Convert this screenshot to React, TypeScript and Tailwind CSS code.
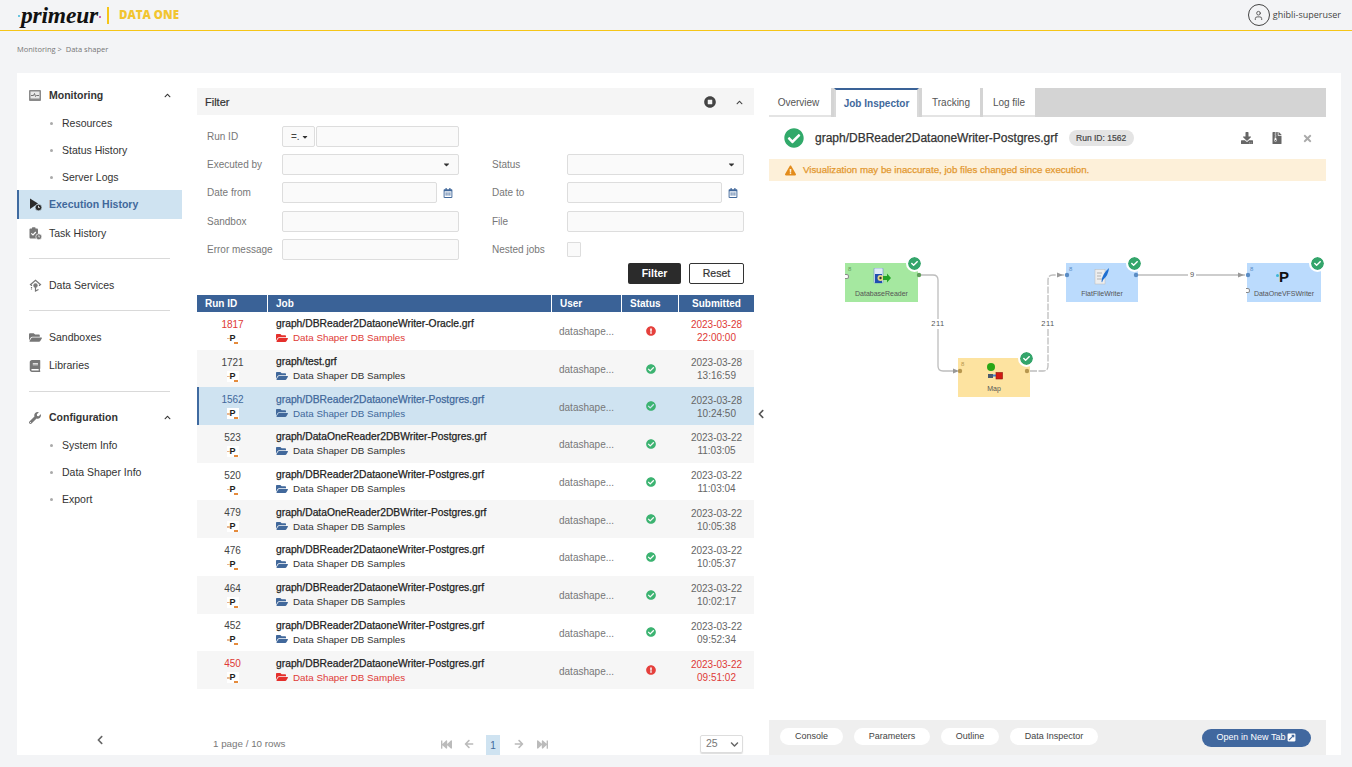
import type { ReactNode } from 'react'
import {
  FaBook,
  FaCaretDown,
  FaCheck,
  FaCheckCircle,
  FaChevronDown,
  FaChevronLeft,
  FaChevronUp,
  FaDownload,
  FaExclamationCircle,
  FaExclamationTriangle,
  FaExternalLinkSquareAlt,
  FaFastBackward,
  FaFastForward,
  FaArrowLeft,
  FaArrowRight,
  FaFileArchive,
  FaFolderOpen,
  FaRegCalendarAlt,
  FaStopCircle,
  FaTimes,
  FaWrench,
} from 'react-icons/fa'
import { LuUser } from 'react-icons/lu'

const sans = "font-['Liberation_Sans',Arial,sans-serif]"

interface Job {
  id: number
  path: string
  user?: string
  date: string
  time: string
  failed?: boolean
  selected?: boolean
}

const jobs: Job[] = [
  { id: 1817, path: 'graph/DBReader2DataoneWriter-Oracle.grf', date: '2023-03-28', time: '22:00:00', failed: true },
  { id: 1721, path: 'graph/test.grf', date: '2023-03-28', time: '13:16:59' },
  { id: 1562, path: 'graph/DBReader2DataoneWriter-Postgres.grf', date: '2023-03-28', time: '10:24:50', selected: true },
  { id: 523, path: 'graph/DataOneReader2DBWriter-Postgres.grf', date: '2023-03-22', time: '11:03:05' },
  { id: 520, path: 'graph/DBReader2DataoneWriter-Postgres.grf', date: '2023-03-22', time: '11:03:04' },
  { id: 479, path: 'graph/DataOneReader2DBWriter-Postgres.grf', date: '2023-03-22', time: '10:05:38' },
  { id: 476, path: 'graph/DBReader2DataoneWriter-Postgres.grf', date: '2023-03-22', time: '10:05:37' },
  { id: 464, path: 'graph/DBReader2DataoneWriter-Postgres.grf', date: '2023-03-22', time: '10:02:17' },
  { id: 452, path: 'graph/DBReader2DataoneWriter-Postgres.grf', date: '2023-03-22', time: '09:52:34' },
  { id: 450, path: 'graph/DBReader2DataoneWriter-Postgres.grf', date: '2023-03-22', time: '09:51:02', failed: true },
]

function PulseIcon() {
  return (
    <svg width="12" height="11" viewBox="0 0 12 11">
      <rect x="0" y="0" width="12" height="11" rx="1" fill="#8a8a8a" />
      <rect x="1.5" y="1.5" width="9" height="7" fill="#e8e8e8" />
      <path d="M2 5.5h2.5l1-2 1 3 1-1H10" fill="none" stroke="#666" strokeWidth="0.9" />
    </svg>
  )
}

function ExecIcon() {
  return (
    <svg width="13" height="13" viewBox="0 0 13 13">
      <path d="M1 0.5 9 5.5 1 11z" fill="#2b2b2b" />
      <circle cx="9.5" cy="9.5" r="3.3" fill="#2b2b2b" stroke="#cfe3f1" strokeWidth="0.6" />
      <path d="M9.5 7.8v1.8h1.3" fill="none" stroke="#fff" strokeWidth="0.8" />
    </svg>
  )
}

function TaskIcon() {
  return (
    <svg width="13" height="13" viewBox="0 0 13 13">
      <rect x="0.5" y="1.5" width="8.5" height="10" rx="1" fill="#777" />
      <rect x="3" y="0.3" width="3.5" height="2.2" rx="0.6" fill="#777" />
      <path d="M2.3 6.3 4 8l2.8-3" fill="none" stroke="#fff" strokeWidth="1.2" />
      <circle cx="9.8" cy="9.8" r="3" fill="#777" stroke="#fff" strokeWidth="0.7" />
      <path d="M9.8 8.4v1.5h1.1" fill="none" stroke="#fff" strokeWidth="0.7" />
    </svg>
  )
}

function ServicesIcon() {
  return (
    <svg width="13" height="13" viewBox="0 0 13 13" fill="none" stroke="#777" strokeWidth="1.2">
      <path d="M1 6 6.5 1.2 12 6" />
      <path d="M2.5 5.5V11M10.5 5.5V8" strokeDasharray="1.5 1" />
      <circle cx="6.5" cy="6.5" r="1.6" fill="#777" />
      <path d="M6.5 8v4l3-1.5" />
    </svg>
  )
}

function MenuRow({ icon, label, chevron, active, strong, className }: { icon: ReactNode; label: string; chevron?: boolean; active?: boolean; strong?: boolean; className?: string }) {
  return (
    <div
      className={`flex items-center pr-[11px] text-[10.5px] ${active ? 'bg-[#cfe3f1] border-l-2 border-[#3f6aa0] pl-[10px] font-bold text-[#41689b]' : 'pl-[12px] text-[#333]'} ${strong ? 'font-bold' : ''} ${className ?? ''}`}
    >
      <span className="flex w-[20px] justify-start">{icon}</span>
      <span className="flex-1">{label}</span>
      {chevron && <FaChevronUp size={7} className="text-[#333]" />}
    </div>
  )
}

function SubRow({ label }: { label: string }) {
  return (
    <div className="flex h-[27px] items-center pl-[33px] pt-[2px] text-[10.5px] text-[#333]">
      <span className="mr-[9px] h-[3px] w-[3px] rounded-full bg-[#aaa]" />
      {label}
    </div>
  )
}

function Sidebar() {
  return (
    <aside className="flex w-[165px] shrink-0 flex-col pt-[9px]">
      <MenuRow className="h-[27px]" strong icon={<PulseIcon />} label="Monitoring" chevron />
      <SubRow label="Resources" />
      <SubRow label="Status History" />
      <SubRow label="Server Logs" />
      <MenuRow className="h-[29px]" active icon={<ExecIcon />} label="Execution History" />
      <MenuRow className="h-[29px]" icon={<TaskIcon />} label="Task History" />
      <div className="mx-[12px] mt-[10px] h-px bg-[#d9d9d9]" />
      <MenuRow className="mt-[13px] h-[27px]" icon={<ServicesIcon />} label="Data Services" />
      <div className="mx-[12px] mt-[11px] h-px bg-[#d9d9d9]" />
      <MenuRow className="mt-[13px] h-[27px]" icon={<FaFolderOpen size={13} className="text-[#777]" />} label="Sandboxes" />
      <MenuRow className="mt-px h-[27px]" icon={<FaBook size={12} className="text-[#777]" />} label="Libraries" />
      <div className="mx-[12px] mt-[12px] h-px bg-[#d9d9d9]" />
      <MenuRow className="mt-[12px] h-[27px]" strong icon={<FaWrench size={12} className="text-[#777]" />} label="Configuration" chevron />
      <SubRow label="System Info" />
      <SubRow label="Data Shaper Info" />
      <SubRow label="Export" />
      <div className="mt-auto flex h-[20px] items-start justify-center">
        <FaChevronLeft size={10} className="text-[#666]" />
      </div>
    </aside>
  )
}

function Field({ width = 'w-[177px]', caret }: { width?: string; caret?: boolean }) {
  return (
    <div className={`flex h-[21px] items-center justify-end rounded-[2px] border border-[#ddd] bg-[#fafafa] pr-[7px] ${width}`}>
      {caret && <FaCaretDown size={9} className="text-[#333]" />}
    </div>
  )
}

function Label({ children }: { children: string }) {
  return <span className="text-[10px] text-[#777]">{children}</span>
}

function FilterForm() {
  return (
    <div className="grid grid-cols-[75px_177px_33px_75px_177px] grid-rows-[21px_21px_21px_22px_21px] items-center gap-y-[7px] px-[10px] pt-[11px]">
      <Label>Run ID</Label>
      <div className="flex">
        <div className="flex h-[21px] w-[33px] items-center justify-between rounded-[2px] border border-[#ddd] bg-[#fafafa] pl-[8px] pr-[5px] text-[10px] text-[#444]">
          =.<FaCaretDown size={8} className="text-[#333]" />
        </div>
        <Field width="ml-px w-[143px]" />
      </div>
      <span className="col-span-3" />

      <Label>Executed by</Label>
      <Field caret />
      <span />
      <Label>Status</Label>
      <Field caret />

      <Label>Date from</Label>
      <div className="flex items-center">
        <Field width="w-[155px]" />
        <FaRegCalendarAlt size={10} className="ml-[6px] text-[#41689b]" />
      </div>
      <span />
      <Label>Date to</Label>
      <div className="flex items-center">
        <Field width="w-[155px]" />
        <FaRegCalendarAlt size={10} className="ml-[6px] text-[#41689b]" />
      </div>

      <Label>Sandbox</Label>
      <Field />
      <span />
      <Label>File</Label>
      <Field />

      <Label>Error message</Label>
      <Field />
      <span />
      <Label>Nested jobs</Label>
      <div className="h-[15px] w-[14px] rounded-[1px] border border-[#ddd] bg-[#fafafa]" />
    </div>
  )
}

// small job type mark, the same in every row
function JobMark() {
  return (
    <span className="relative flex h-[11px] w-[12px] items-center justify-center bg-white font-['Liberation_Sans'] text-[9px] font-bold leading-none text-[#222]">
      <span className="absolute left-0 top-[5px] h-[1.5px] w-[3px] bg-[#e7b68f]" />
      P
      <span className="absolute bottom-0 right-[1px] h-[2px] w-[4px] bg-[#e58b3c]" />
    </span>
  )
}

function JobRow({ job, striped }: { job: Job; striped: boolean }) {
  const bg = job.selected ? 'bg-[#cfe3f1]' : striped ? 'bg-[#f6f6f6]' : 'bg-white'
  const accent = job.failed ? 'text-[#de3a36]' : job.selected ? 'text-[#41689b]' : 'text-[#333]'
  return (
    <div className={`relative grid h-[37.7px] grid-cols-[71px_284px_70px_57px_75px] items-center ${bg}`}>
      {job.selected && <span className="absolute bottom-0 left-0 top-0 w-[2px] bg-[#3f6aa0]" />}
      <div className={`flex flex-col items-center gap-[2px] text-[10px] ${job.failed ? 'text-[#de3a36]' : job.selected ? 'text-[#41689b]' : 'text-[#444]'}`}>
        <span className="leading-[13px]">{job.id}</span>
        <JobMark />
      </div>
      <div className="flex flex-col gap-[1px] pl-[8px]">
        <span className={`text-[10.3px] leading-[13px] [-webkit-text-stroke:0.25px] ${job.selected ? 'text-[#41689b]' : 'text-[#222]'}`}>{job.path}</span>
        <span className={`flex items-center gap-[5px] text-[9.8px] leading-[13px] ${accent}`}>
          <FaFolderOpen size={12} className={job.failed ? 'text-[#e5302c]' : 'text-[#41689b]'} />
          Data Shaper DB Samples
        </span>
      </div>
      <span className="pl-[7px] pt-[2px] text-[10px] text-[#777]">datashape...</span>
      <span className="flex justify-center">
        {job.failed ? <FaExclamationCircle size={10} className="text-[#e5403c]" /> : <FaCheckCircle size={10} className="text-[#3cb371]" />}
      </span>
      <span className={`pt-[1px] text-center text-[10px] leading-[13px] ${job.failed ? 'text-[#de3a36]' : 'text-[#666]'}`}>
        {job.date}
        <br />
        {job.time}
      </span>
    </div>
  )
}

function JobTable() {
  return (
    <>
      <div className="mt-[11px] grid h-[17px] grid-cols-[71px_284px_70px_57px_75px] items-center bg-[#3a6297] text-[10px] font-bold text-white">
        <span className="flex h-full items-center border-r border-white pl-[8px]">Run ID</span>
        <span className="flex h-full items-center border-r border-white pl-[8px]">Job</span>
        <span className="flex h-full items-center border-r border-white pl-[8px]">User</span>
        <span className="flex h-full items-center border-r border-white pl-[8px]">Status</span>
        <span className="flex h-full items-center justify-center">Submitted</span>
      </div>
      {jobs.map((job, i) => (
        <JobRow key={job.id} job={job} striped={i % 2 === 1} />
      ))}
    </>
  )
}

function Pagination() {
  return (
    <div className="mt-auto flex h-[20px] items-center pb-[2px] text-[#bbb]">
      <span className="ml-[16px] w-[228px] text-[9.8px] text-[#777]">1 page / 10 rows</span>
      <FaFastBackward size={11} />
      <FaArrowLeft size={10} className="ml-[12px]" />
      <span className="ml-[12px] flex h-[20px] w-[14px] items-center justify-center self-start bg-[#cfe3f1] text-[10px] text-[#41689b]">1</span>
      <FaArrowRight size={10} className="ml-[14px]" />
      <FaFastForward size={11} className="ml-[13px]" />
      <div className="ml-auto mr-[11px] flex h-[18px] w-[43px] items-center justify-between rounded-[2px] border border-[#ddd] pl-[5px] pr-[3px] text-[10.5px] text-[#777] shadow-[0_1px_1px_#ddd]">
        25
        <FaChevronDown size={9} className="text-[#666]" />
      </div>
    </div>
  )
}

function NodeCheck({ className }: { className: string }) {
  return (
    <span className={`absolute flex h-[13px] w-[13px] items-center justify-center rounded-full bg-[#34a56b] outline-2 outline-white ${className}`}>
      <FaCheck size={7} className="text-white" />
    </span>
  )
}

function GraphNode({ label, className, dot, children }: { label: string; className: string; dot: string; children: ReactNode }) {
  return (
    <div className={`absolute h-[39px] ${className}`}>
      <span className={`absolute left-[3px] top-[2px] text-[6px] leading-[8px] ${dot}`}>8</span>
      <div className="flex h-[23px] justify-center pt-[5px]">{children}</div>
      <div className="mt-[3px] text-center text-[7px] leading-[9px] text-[#555]">{label}</div>
      <NodeCheck className="-top-[6px] -right-[3px]" />
    </div>
  )
}

function GraphCanvas() {
  return (
    <div className="relative flex-1 bg-white">
      <svg className="absolute inset-0 h-full w-full" fill="none" stroke="#bdbdbd" strokeWidth="1.3">
        <path d="M152 94h12q5 0 5 5v86q0 5 5 5h14" />
        <path d="M261 190h13q5 0 5-5V99q0-5 5-5h14" strokeDasharray="7 1.5" />
        <path d="M369 94h107" />
        <path d="M184 187.500l6 2.500-6 2.500zM288 91.500l6 2.500-6 2.500zM469 91.500l6 2.500-6 2.500z" fill="#999" stroke="none" />
      </svg>
      <span className="absolute left-[160px] top-[138px] w-[18px] bg-white text-center text-[7.5px] leading-[10px] tracking-[0.5px] text-[#555]">211</span>
      <span className="absolute left-[270px] top-[138px] w-[18px] bg-white text-center text-[7.5px] leading-[10px] tracking-[0.5px] text-[#555]">211</span>
      <span className="absolute left-[419px] top-[89px] w-[8px] bg-white text-center text-[7.5px] leading-[10px] text-[#555]">9</span>

      <GraphNode label="DatabaseReader" className="left-[76px] top-[82px] w-[73px] bg-[#a5e8a0]" dot="text-[#5f9c5a]">
        <svg width="18" height="17" viewBox="0 0 18 17">
          <rect x="1" y="0" width="9" height="15" rx="1" fill="#dfe9f7" stroke="#6b8fc9" strokeWidth="0.6" />
          <rect x="2" y="6" width="7" height="9" fill="#1f4fb0" />
          <circle cx="7.500" cy="10" r="3" fill="#e7d68a" />
          <circle cx="7.500" cy="10" r="1.200" fill="#333" />
          <path d="M10 8h4V5.500L18 10l-4 4.500V12h-4z" fill="#23a327" />
        </svg>
      </GraphNode>
      <GraphNode label="Map" className="left-[189px] top-[177px] w-[72px] bg-[#fde3a0]" dot="text-[#b8974e]">
        <svg width="18" height="17" viewBox="0 0 18 17">
          <circle cx="6" cy="4" r="4" fill="#2aa615" />
          <path d="M3 11h5v4H3z" fill="#4a5a6e" />
          <path d="M8 12.500h4" stroke="#3f86d8" strokeWidth="2" />
          <rect x="11" y="9.500" width="6.500" height="6.500" fill="#d11a12" stroke="#8f1510" strokeWidth="0.6" />
        </svg>
      </GraphNode>
      <GraphNode label="FlatFileWriter" className="left-[297px] top-[82px] w-[72px] bg-[#bbdbfd]" dot="text-[#5a8cc4]">
        <svg width="16" height="17" viewBox="0 0 16 17">
          <rect x="1" y="1.500" width="10" height="14.500" fill="#eee" stroke="#bbb" strokeWidth="0.5" />
          <path d="M3 5h5M3 8h4M3 11h5" stroke="#999" strokeWidth="0.7" />
          <path d="M15 0q-.5 7-6 12l-1 2.500-.5-1Q8 6 15 0z" fill="#1f6fd1" />
        </svg>
      </GraphNode>
      <GraphNode label="DataOneVFSWriter" className="left-[478px] top-[82px] w-[74px] bg-[#bbdbfd]" dot="text-[#5a8cc4]">
        <span className="relative text-[15px] font-bold leading-[17px] text-[#111]">
          <span className="absolute -left-[3px] top-[6px] h-[3px] w-[3px] rounded-full bg-[#3bb6d8]" />
          P
        </span>
      </GraphNode>
      {/* ports sit on top of the nodes */}
      <svg className="pointer-events-none absolute inset-0 h-full w-full">
        <circle cx="150" cy="94" r="2.200" fill="#5f9c5a" />
        <circle cx="191" cy="190" r="2.200" fill="#b8974e" />
        <circle cx="258" cy="190" r="2.200" fill="#b8974e" />
        <circle cx="298" cy="94" r="2.200" fill="#5a8cc4" />
        <circle cx="367" cy="94" r="2.200" fill="#5a8cc4" />
        <circle cx="479" cy="94" r="2.200" fill="#5a8cc4" />
      </svg>
      <span className="absolute left-[477px] top-[107px] h-[5px] w-[4px] rounded-r-full border border-l-0 border-[#888] bg-white" />
      <span className="absolute left-[76px] top-[93px] h-[5px] w-[4px] rounded-r-full border border-l-0 border-[#888] bg-white" />
    </div>
  )
}

function JobPanel() {
  return (
    <section className="ml-[15px] mr-[15px] flex w-[557px] flex-col pt-[15px]">
      <div className="flex h-[29px] shrink-0 items-stretch bg-[#d4d4d4] text-[10px] text-[#555]">
        <span className="flex w-[62px] items-center justify-center border-b-2 border-[#e4e4e4] bg-white pt-[2px] pr-[3px]">Overview</span>
        <span className="ml-[3px] flex w-[85px] items-center justify-center border-x-2 border-t-2 border-[#3a6297] border-x-[#d9d9d9] bg-white font-bold text-[#41689b]">Job Inspector</span>
        <span className="ml-[3px] flex w-[58px] items-center justify-center border-b-2 border-[#e4e4e4] bg-white pt-[2px]">Tracking</span>
        <span className="ml-[3px] flex w-[52px] items-center justify-center border-b-2 border-[#e4e4e4] bg-white pt-[2px]">Log file</span>
      </div>
      <div className="flex h-[42px] shrink-0 items-center pl-[15px] pr-[13px]">
        <FaCheckCircle size={20} className="text-[#31a96a]" />
        <span className="ml-[11px] text-[12px] text-[#333] [-webkit-text-stroke:0.25px]">graph/DBReader2DataoneWriter-Postgres.grf</span>
        <span className="ml-[11px] flex h-[16px] w-[65px] items-center justify-center rounded-full bg-[#e4e4e4] text-[8.5px] text-[#444] [-webkit-text-stroke:0.2px]">Run ID: 1562</span>
        <FaDownload size={12} className="ml-auto text-[#666]" />
        <FaFileArchive size={12} className="ml-[18px] text-[#666]" />
        <FaTimes size={11} className="ml-[19px] text-[#aaa]" />
      </div>
      <div className="flex h-[22px] shrink-0 items-center bg-[#fdf0d9] pl-[16px] text-[9.7px] text-[#e3982f] [-webkit-text-stroke:0.25px]">
        <FaExclamationTriangle size={11} className="mr-[7px] text-[#e38c1c]" />
        Visualization may be inaccurate, job files changed since execution.
      </div>
      <GraphCanvas />
      <div className="flex h-[35px] shrink-0 items-center bg-[#efefef] pl-[11px] pr-[15px] text-[9px] text-[#444]">
        <span className="mb-[2px] flex h-[17px] w-[63px] items-center justify-center rounded-full bg-white">Console</span>
        <span className="mb-[2px] ml-[11px] flex h-[17px] w-[76px] items-center justify-center rounded-full bg-white">Parameters</span>
        <span className="mb-[2px] ml-[11px] flex h-[17px] w-[58px] items-center justify-center rounded-full bg-white">Outline</span>
        <span className="mb-[2px] ml-[11px] flex h-[17px] w-[88px] items-center justify-center rounded-full bg-white">Data Inspector</span>
        <span className="ml-auto flex h-[18px] w-[109px] items-center justify-center gap-[2px] rounded-full bg-[#41689f] text-white">
          Open in New Tab <FaExternalLinkSquareAlt size={9} />
        </span>
      </div>
    </section>
  )
}

export default function App() {
  return (
    <div className={`flex h-[767px] w-[1352px] flex-col overflow-hidden bg-[#f3f4f6] ${sans}`}>
      <header className="flex h-[30px] shrink-0 items-center pl-[18px] pr-[11px]">
        <span className="mr-[1px] mt-[2px] h-[2px] w-[2px] rounded-full bg-[#3bb6d8]" />
        <span className="font-['Liberation_Serif',serif] text-[23.5px] font-bold italic leading-[24px] tracking-[-0.2px] text-[#111]">primeur</span>
        <span className="ml-[1px] mt-[4px] h-[2px] w-[2px] rounded-full bg-[#c0399a]" />
        <span className="ml-[6px] h-[17px] w-[2px] bg-[#f5c518]" />
        <span className="ml-[10px] font-['Open_Sans',sans-serif] text-[11.5px] font-extrabold text-[#f2c530]">DATA ONE</span>
        <span className="ml-auto flex h-[22px] w-[22px] items-center justify-center rounded-full border border-[#444]">
          <LuUser size={11} className="text-[#555]" />
        </span>
        <span className="ml-[3px] font-['Open_Sans',sans-serif] text-[9px] text-[#444]">ghibli-superuser</span>
      </header>
      <div className="h-px shrink-0 bg-[#f5c518]" />
      <div className="flex h-[42px] shrink-0 items-start pl-[17px] pt-[13px] font-['Open_Sans',sans-serif] text-[7.5px] leading-[11px] text-[#777]">
        Monitoring &gt;&nbsp;&nbsp;Data shaper
      </div>
      <main className="ml-[17px] flex h-[682px] w-[1324px] bg-white">
        <Sidebar />
        <section className="relative ml-[15px] flex w-[557px] shrink-0 flex-col pt-[15px]">
          <div className="flex h-[27px] shrink-0 items-center bg-[#f5f5f5] pl-[8px] pr-[11px] pt-[1px] text-[11px] text-[#333] [-webkit-text-stroke:0.2px]">
            Filter
            <FaStopCircle size={12} className="ml-auto text-[#444]" />
            <FaChevronUp size={7} className="ml-[20px] text-[#444]" />
          </div>
          <FilterForm />
          <div className="mr-[10px] mt-[3px] flex justify-end gap-[8px] text-[10.5px] font-bold">
            <span className="flex h-[21px] w-[53px] items-center justify-center rounded-[2px] bg-[#2b2b2b] text-white">Filter</span>
            <span className="flex h-[21px] w-[55px] items-center justify-center rounded-[2px] border border-[#333] font-normal text-[#333] [-webkit-text-stroke:0.2px]">Reset</span>
          </div>
          <JobTable />
          <Pagination />
          <FaChevronLeft size={10} className="absolute -right-[12px] top-[336px] text-[#555]" />
        </section>
        <JobPanel />
      </main>
    </div>
  )
}
